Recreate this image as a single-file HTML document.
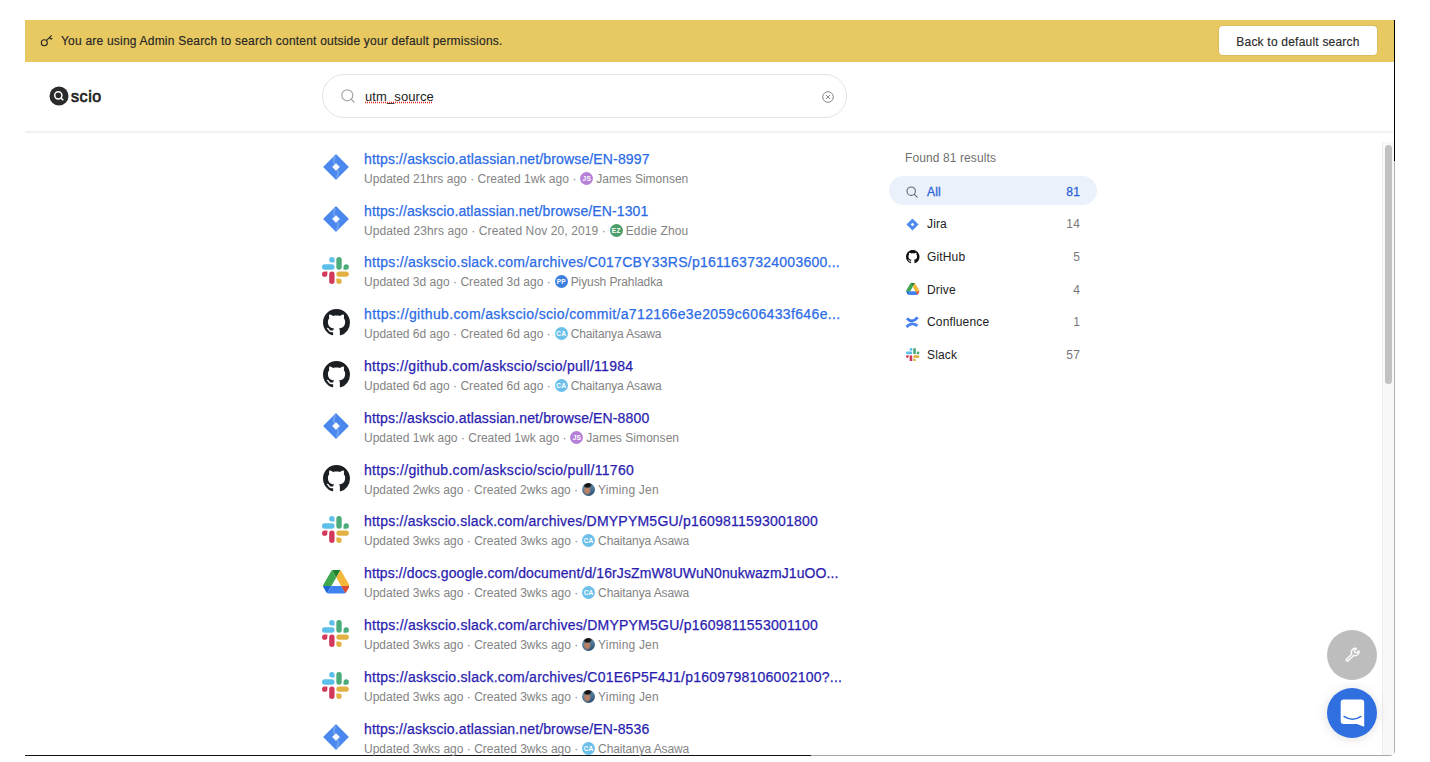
<!DOCTYPE html>
<html><head><meta charset="utf-8"><title>scio</title>
<style>
*{box-sizing:border-box;margin:0;padding:0}
html,body{width:1430px;height:762px;overflow:hidden;background:#fff;font-family:"Liberation Sans",sans-serif;color:#222}
#banner{position:absolute;left:25px;top:20px;width:1369px;height:42px;background:#e8c861}
#key{position:absolute;left:13px;top:13px}
#banner .msg{position:absolute;left:36px;top:13px;font-size:12px;line-height:16px;letter-spacing:.21px;color:#262626;white-space:nowrap}
#btn{position:absolute;left:1194px;top:6px;width:158px;height:29px;background:#fff;border-radius:4px;font-size:12px;letter-spacing:.21px;color:#2a2a2a;text-align:center;line-height:32px;box-shadow:0 0 0 1px rgba(60,70,90,.08)}
#rline{position:absolute;left:1394px;top:20px;width:1px;height:141px;background:#000}
#frame{position:absolute;left:25px;top:20px;width:1370px;height:736px;border-right:1px solid #b0b0b0;border-bottom:1px solid #a8a8a8;border-bottom-right-radius:5px}
#bline{position:absolute;left:25px;top:755px;width:786px;height:1px;background:#111}
#hdrline{position:absolute;left:25px;top:131px;width:1368px;height:2px;background:linear-gradient(#f5f5f5,#ededed)}
#logo{position:absolute;left:49px;top:86px}
#logotext{position:absolute;left:71px;top:87px;font-size:16px;line-height:20px;font-weight:normal;-webkit-text-stroke:.7px #222;color:#222;letter-spacing:.6px}
#search{position:absolute;left:322px;top:74px;width:525px;height:44px;border:1px solid #e3e3e3;border-radius:22px}
#search .q{position:absolute;left:42px;top:14px;font-size:13px;line-height:16px;letter-spacing:.1px;color:#222;text-decoration:underline dotted #e0281e;text-underline-offset:1px}
#search .si{position:absolute;left:18px;top:14px}
#search .ci{position:absolute;left:498.7px;top:15.5px}
#track{position:absolute;left:1382px;top:142px;width:12px;height:613px;background:#f8f8f8;border-left:1px solid #ededed}
#thumb{position:absolute;left:1385px;top:145px;width:7px;height:239px;background:#c1c1c1;border-radius:4px}
.fab{position:absolute;left:1327px;width:50px;height:50px;border-radius:50%}
#wrench{top:630px;background:#bdbdbd}
#chat{top:688px;background:#2f6fe0;box-shadow:0 1px 12px rgba(0,0,0,.13)}
.fab svg{position:absolute;left:0;top:0}
.row{position:absolute;left:322px;width:560px;height:52px}
.row .icw{position:absolute;left:0;top:3px;width:28px;height:28px}
.row .icw svg{position:absolute;left:0;top:0}
.row .t{position:absolute;left:42px;top:0;font-size:14px;line-height:16px;letter-spacing:.17px;white-space:nowrap;color:#2b6be6}
.row .t.v{color:#2a1db0}
.row .s{position:absolute;left:42px;top:20px;font-size:12px;line-height:16px;letter-spacing:.06px;white-space:nowrap;color:#7a7a7a}
.av{display:inline-block;width:13px;height:13px;border-radius:50%;vertical-align:2px;color:#fff;font-size:6.5px;font-weight:bold;letter-spacing:.2px;text-align:center;line-height:13px;margin-right:3px;margin-left:.5px}
.av.ph{color:transparent;background:radial-gradient(ellipse 38% 28% at 42% 14%,#141414 55%,rgba(20,20,20,0) 100%),radial-gradient(ellipse 30% 36% at 40% 58%,#b98266 55%,rgba(185,130,102,0) 100%),linear-gradient(160deg,#8fb3c8 0%,#4d7696 50%,#23476a 100%)}
#side{position:absolute;left:889px;top:0;width:208px;height:400px}
#found{position:absolute;left:16px;top:150.5px;font-size:12px;line-height:14px;letter-spacing:.1px;color:#707070;white-space:nowrap}
.cat{position:absolute;left:0;width:208px;height:29px;font-size:12px;color:#222}
.cat.sel{background:#eaf1fb;border-radius:15px;color:#2b64d8}
.cat .ci{position:absolute;left:17px;top:8px;width:13px;height:13px}
.cat .ci svg{position:absolute;left:0;top:0}
.cat .cn{position:absolute;left:38px;top:8px;line-height:14px;letter-spacing:.15px}
.cat .cc{position:absolute;right:17.4px;top:8px;line-height:14px;color:#777;letter-spacing:.15px}
.cat.sel .cc{color:#2b64d8}
.r-jira .icw{top:2.3px}
.r-github .icw{left:1px;top:3px}
.r-drive .icw{top:5px;left:.5px}
.row .t{-webkit-text-stroke:.25px currentColor}
.cat.sel .cn,.cat.sel .cc{-webkit-text-stroke:.3px currentColor}
.ci-conf svg{left:-1px!important;top:0!important}
.ci-search svg{top:2px!important}
.ci-jira svg{top:.5px!important}
.cat .cc{right:17px}
.row .s{color:#838383}
#banner .msg,#btn{-webkit-text-stroke:.15px currentColor}
.cat.sel .cn,.cat.sel .cc{top:9px}

</style></head><body>
<div id="banner"><svg id="key" width="16" height="14" viewBox="0 0 16 14"><circle cx="6.3" cy="9.7" r="3" fill="none" stroke="#262626" stroke-width="1.1"/><path d="M8.4 7.6 L13.6 2.4 M11.5 4.5 L13.2 6.2 L14.3 5.1" stroke="#262626" stroke-width="1.1" fill="none" stroke-linejoin="round"/></svg><span class="msg">You are using Admin Search to search content outside your default permissions.</span><div id="btn">Back to default search</div></div>
<div id="frame"></div><div id="rline"></div><div id="bline"></div>
<div id="hdrline"></div>
<svg id="logo" width="20" height="20" viewBox="0 0 20 20"><circle cx="10" cy="10" r="9.5" fill="#2b2b2b"/><circle cx="9.3" cy="9.3" r="3.6" fill="none" stroke="#fff" stroke-width="1.5"/><path d="M11.9 11.9 L14.3 14.3" stroke="#fff" stroke-width="1.5"/></svg>
<div id="logotext">scio</div>
<div id="search"><svg class="si" width="16" height="16" viewBox="0 0 16 16"><circle cx="6.3" cy="6.3" r="5.5" fill="none" stroke="#a3a3a3" stroke-width="1.2"/><path d="M10.2 10.2 L13 13" stroke="#a3a3a3" stroke-width="1.2" stroke-linecap="round"/></svg><span class="q">utm_source</span><svg class="ci" width="12" height="12" viewBox="0 0 12 12"><circle cx="6" cy="6" r="5.3" fill="none" stroke="#8a8a8a" stroke-width="1"/><path d="M4 4 L8 8 M8 4 L4 8" stroke="#8a8a8a" stroke-width="1"/></svg></div>
<div id="track"></div><div id="thumb"></div>
<div class="fab" id="wrench"><svg width="50" height="50" viewBox="0 0 50 50"><g transform="translate(19.4 30.5) scale(.78) translate(-18.3 -35.2)"><path d="M18.5 33.5 L25.2 26.8 C24.2 24.5 24.8 22 26.6 20.6 C28 19.5 29.8 19.2 31.3 19.7 L28.6 22.4 L29.2 24.8 L31.6 25.4 L34.3 22.7 C34.8 24.3 34.4 26.1 33.2 27.4 C31.8 28.9 29.6 29.5 27.5 28.7 L20.6 35.6 C20 36.2 19.1 36.2 18.5 35.6 C17.9 35 17.9 34.1 18.5 33.5 Z" fill="none" stroke="#fff" stroke-width="1.7" stroke-linejoin="round"/></g></svg></div>
<div class="fab" id="chat"><svg width="50" height="50" viewBox="0 0 50 50"><path d="M13.7 14.6 C13.7 12.8 14.8 11.6 16.6 11.6 L34.3 11.6 C36.1 11.6 37.2 12.8 37.2 14.6 L37.2 38.7 L30 35.9 L16.6 35.9 C14.8 35.9 13.7 34.7 13.7 32.9 Z" fill="#fff"/><path d="M17 28.4 Q25.5 34.2 34 28.4" stroke="#2f6fe0" stroke-width="1.4" fill="none" stroke-linecap="round"/></svg></div>

<div id="results">
<div class="row r-jira" style="top:150.70px"><div class="icw"><svg viewBox="0 0 28 28" width="28" height="28"><path d="M14 2 L26 14 L14 26 L2 14 Z" fill="#4a88ee" stroke="#4a88ee" stroke-width="1.3" stroke-linejoin="round"/><path d="M13.6 3 Q10.6 7.2 12.6 11.4" stroke="#8db3f5" stroke-width="2.2" fill="none" opacity=".5"/><path d="M15.4 16.6 Q17.4 20.8 14.4 25" stroke="#8db3f5" stroke-width="2.2" fill="none" opacity=".5"/><path d="M14 10.4 L17.6 14 L14 17.6 L10.4 14 Z" fill="#fff" stroke="#fff" stroke-width=".4" stroke-linejoin="round"/></svg></div><div class="t" style="letter-spacing:0.142px">https://askscio.atlassian.net/browse/EN-8997</div><div class="s"><span style="letter-spacing:0.044px">Updated 21hrs ago · Created 1wk ago · </span><span class="av" style="background:#b780d8">JS</span><span style="letter-spacing:-0.005px">James Simonsen</span></div></div>
<div class="row r-jira" style="top:202.50px"><div class="icw"><svg viewBox="0 0 28 28" width="28" height="28"><path d="M14 2 L26 14 L14 26 L2 14 Z" fill="#4a88ee" stroke="#4a88ee" stroke-width="1.3" stroke-linejoin="round"/><path d="M13.6 3 Q10.6 7.2 12.6 11.4" stroke="#8db3f5" stroke-width="2.2" fill="none" opacity=".5"/><path d="M15.4 16.6 Q17.4 20.8 14.4 25" stroke="#8db3f5" stroke-width="2.2" fill="none" opacity=".5"/><path d="M14 10.4 L17.6 14 L14 17.6 L10.4 14 Z" fill="#fff" stroke="#fff" stroke-width=".4" stroke-linejoin="round"/></svg></div><div class="t" style="letter-spacing:0.114px">https://askscio.atlassian.net/browse/EN-1301</div><div class="s"><span style="letter-spacing:0.102px">Updated 23hrs ago · Created Nov 20, 2019 · </span><span class="av" style="background:#4c9e68">EZ</span><span style="letter-spacing:0.127px">Eddie Zhou</span></div></div>
<div class="row r-slack" style="top:254.30px"><div class="icw"><svg class="ic" viewBox="0 0 54 54" width="27" height="27"><path d="M19.712.133a5.381 5.381 0 0 0-5.376 5.387 5.381 5.381 0 0 0 5.376 5.386h5.376V5.52A5.381 5.381 0 0 0 19.712.133m0 14.365H5.376A5.381 5.381 0 0 0 0 19.884a5.381 5.381 0 0 0 5.376 5.387h14.336a5.381 5.381 0 0 0 5.376-5.387 5.381 5.381 0 0 0-5.376-5.386" fill="#5bbfe9"/><path d="M53.76 19.884a5.381 5.381 0 0 0-5.376-5.386 5.381 5.381 0 0 0-5.376 5.386v5.387h5.376a5.381 5.381 0 0 0 5.376-5.387m-14.336 0V5.52A5.381 5.381 0 0 0 34.048.133a5.381 5.381 0 0 0-5.376 5.387v14.364a5.381 5.381 0 0 0 5.376 5.387 5.381 5.381 0 0 0 5.376-5.387" fill="#4bab79"/><path d="M34.048 54a5.381 5.381 0 0 0 5.376-5.387 5.381 5.381 0 0 0-5.376-5.386h-5.376v5.386A5.381 5.381 0 0 0 34.048 54m0-14.365h14.336a5.381 5.381 0 0 0 5.376-5.386 5.381 5.381 0 0 0-5.376-5.387H34.048a5.381 5.381 0 0 0-5.376 5.387 5.381 5.381 0 0 0 5.376 5.386" fill="#e1b142"/><path d="M0 34.249a5.381 5.381 0 0 0 5.376 5.386 5.381 5.381 0 0 0 5.376-5.386v-5.387H5.376A5.381 5.381 0 0 0 0 34.25m14.336-.001v14.364A5.381 5.381 0 0 0 19.712 54a5.381 5.381 0 0 0 5.376-5.387V34.25a5.381 5.381 0 0 0-5.376-5.387 5.381 5.381 0 0 0-5.376 5.387" fill="#d23a5d"/></svg></div><div class="t" style="letter-spacing:0.255px">https://askscio.slack.com/archives/C017CBY33RS/p1611637324003600...</div><div class="s"><span style="letter-spacing:0.021px">Updated 3d ago · Created 3d ago · </span><span class="av" style="background:#3d7fdd">PP</span><span style="letter-spacing:-0.089px">Piyush Prahladka</span></div></div>
<div class="row r-github" style="top:306.10px"><div class="icw"><svg class="ic" viewBox="0 0 16 16" width="27" height="27"><path fill="#1b1f23" d="M8 0C3.58 0 0 3.58 0 8c0 3.54 2.29 6.53 5.47 7.59.4.07.55-.17.55-.38 0-.19-.01-.82-.01-1.49-2.01.37-2.53-.49-2.69-.94-.09-.23-.48-.94-.82-1.13-.28-.15-.68-.52-.01-.53.63-.01 1.08.58 1.23.82.72 1.21 1.87.87 2.33.66.07-.52.28-.87.51-1.06-1.78-.2-3.64-.89-3.64-3.95 0-.87.31-1.59.82-2.15-.08-.2-.36-1.02.08-2.12 0 0 .67-.21 2.2.82.64-.18 1.32-.27 2-.27.68 0 1.36.09 2 .27 1.53-1.04 2.2-.82 2.2-.82.44 1.1.16 1.92.08 2.12.51.56.82 1.27.82 2.15 0 3.07-1.87 3.75-3.65 3.95.29.25.54.73.54 1.48 0 1.07-.01 1.93-.01 2.2 0 .21.15.46.55.38A8.013 8.013 0 0016 8c0-4.42-3.58-8-8-8z"/></svg></div><div class="t" style="letter-spacing:0.358px">https://github.com/askscio/scio/commit/a712166e3e2059c606433f646e...</div><div class="s"><span style="letter-spacing:0.021px">Updated 6d ago · Created 6d ago · </span><span class="av" style="background:#6cc0ea">CA</span><span style="letter-spacing:-0.138px">Chaitanya Asawa</span></div></div>
<div class="row r-github" style="top:357.90px"><div class="icw"><svg class="ic" viewBox="0 0 16 16" width="27" height="27"><path fill="#1b1f23" d="M8 0C3.58 0 0 3.58 0 8c0 3.54 2.29 6.53 5.47 7.59.4.07.55-.17.55-.38 0-.19-.01-.82-.01-1.49-2.01.37-2.53-.49-2.69-.94-.09-.23-.48-.94-.82-1.13-.28-.15-.68-.52-.01-.53.63-.01 1.08.58 1.23.82.72 1.21 1.87.87 2.33.66.07-.52.28-.87.51-1.06-1.78-.2-3.64-.89-3.64-3.95 0-.87.31-1.59.82-2.15-.08-.2-.36-1.02.08-2.12 0 0 .67-.21 2.2.82.64-.18 1.32-.27 2-.27.68 0 1.36.09 2 .27 1.53-1.04 2.2-.82 2.2-.82.44 1.1.16 1.92.08 2.12.51.56.82 1.27.82 2.15 0 3.07-1.87 3.75-3.65 3.95.29.25.54.73.54 1.48 0 1.07-.01 1.93-.01 2.2 0 .21.15.46.55.38A8.013 8.013 0 0016 8c0-4.42-3.58-8-8-8z"/></svg></div><div class="t v" style="letter-spacing:0.287px">https://github.com/askscio/scio/pull/11984</div><div class="s"><span style="letter-spacing:0.021px">Updated 6d ago · Created 6d ago · </span><span class="av" style="background:#6cc0ea">CA</span><span style="letter-spacing:-0.125px">Chaitanya Asawa</span></div></div>
<div class="row r-jira" style="top:409.70px"><div class="icw"><svg viewBox="0 0 28 28" width="28" height="28"><path d="M14 2 L26 14 L14 26 L2 14 Z" fill="#4a88ee" stroke="#4a88ee" stroke-width="1.3" stroke-linejoin="round"/><path d="M13.6 3 Q10.6 7.2 12.6 11.4" stroke="#8db3f5" stroke-width="2.2" fill="none" opacity=".5"/><path d="M15.4 16.6 Q17.4 20.8 14.4 25" stroke="#8db3f5" stroke-width="2.2" fill="none" opacity=".5"/><path d="M14 10.4 L17.6 14 L14 17.6 L10.4 14 Z" fill="#fff" stroke="#fff" stroke-width=".4" stroke-linejoin="round"/></svg></div><div class="t v" style="letter-spacing:0.135px">https://askscio.atlassian.net/browse/EN-8800</div><div class="s"><span style="letter-spacing:0.010px">Updated 1wk ago · Created 1wk ago · </span><span class="av" style="background:#b780d8">JS</span><span style="letter-spacing:0.053px">James Simonsen</span></div></div>
<div class="row r-github" style="top:461.50px"><div class="icw"><svg class="ic" viewBox="0 0 16 16" width="27" height="27"><path fill="#1b1f23" d="M8 0C3.58 0 0 3.58 0 8c0 3.54 2.29 6.53 5.47 7.59.4.07.55-.17.55-.38 0-.19-.01-.82-.01-1.49-2.01.37-2.53-.49-2.69-.94-.09-.23-.48-.94-.82-1.13-.28-.15-.68-.52-.01-.53.63-.01 1.08.58 1.23.82.72 1.21 1.87.87 2.33.66.07-.52.28-.87.51-1.06-1.78-.2-3.64-.89-3.64-3.95 0-.87.31-1.59.82-2.15-.08-.2-.36-1.02.08-2.12 0 0 .67-.21 2.2.82.64-.18 1.32-.27 2-.27.68 0 1.36.09 2 .27 1.53-1.04 2.2-.82 2.2-.82.44 1.1.16 1.92.08 2.12.51.56.82 1.27.82 2.15 0 3.07-1.87 3.75-3.65 3.95.29.25.54.73.54 1.48 0 1.07-.01 1.93-.01 2.2 0 .21.15.46.55.38A8.013 8.013 0 0016 8c0-4.42-3.58-8-8-8z"/></svg></div><div class="t v" style="letter-spacing:0.304px">https://github.com/askscio/scio/pull/11760</div><div class="s"><span style="letter-spacing:-0.001px">Updated 2wks ago · Created 2wks ago · </span><span class="av ph">YJ</span><span style="letter-spacing:0.196px">Yiming Jen</span></div></div>
<div class="row r-slack" style="top:513.30px"><div class="icw"><svg class="ic" viewBox="0 0 54 54" width="27" height="27"><path d="M19.712.133a5.381 5.381 0 0 0-5.376 5.387 5.381 5.381 0 0 0 5.376 5.386h5.376V5.52A5.381 5.381 0 0 0 19.712.133m0 14.365H5.376A5.381 5.381 0 0 0 0 19.884a5.381 5.381 0 0 0 5.376 5.387h14.336a5.381 5.381 0 0 0 5.376-5.387 5.381 5.381 0 0 0-5.376-5.386" fill="#5bbfe9"/><path d="M53.76 19.884a5.381 5.381 0 0 0-5.376-5.386 5.381 5.381 0 0 0-5.376 5.386v5.387h5.376a5.381 5.381 0 0 0 5.376-5.387m-14.336 0V5.52A5.381 5.381 0 0 0 34.048.133a5.381 5.381 0 0 0-5.376 5.387v14.364a5.381 5.381 0 0 0 5.376 5.387 5.381 5.381 0 0 0 5.376-5.387" fill="#4bab79"/><path d="M34.048 54a5.381 5.381 0 0 0 5.376-5.387 5.381 5.381 0 0 0-5.376-5.386h-5.376v5.386A5.381 5.381 0 0 0 34.048 54m0-14.365h14.336a5.381 5.381 0 0 0 5.376-5.386 5.381 5.381 0 0 0-5.376-5.387H34.048a5.381 5.381 0 0 0-5.376 5.387 5.381 5.381 0 0 0 5.376 5.386" fill="#e1b142"/><path d="M0 34.249a5.381 5.381 0 0 0 5.376 5.386 5.381 5.381 0 0 0 5.376-5.386v-5.387H5.376A5.381 5.381 0 0 0 0 34.25m14.336-.001v14.364A5.381 5.381 0 0 0 19.712 54a5.381 5.381 0 0 0 5.376-5.387V34.25a5.381 5.381 0 0 0-5.376-5.387 5.381 5.381 0 0 0-5.376 5.387" fill="#d23a5d"/></svg></div><div class="t v" style="letter-spacing:0.224px">https://askscio.slack.com/archives/DMYPYM5GU/p1609811593001800</div><div class="s"><span style="letter-spacing:0.004px">Updated 3wks ago · Created 3wks ago · </span><span class="av" style="background:#6cc0ea">CA</span><span style="letter-spacing:-0.115px">Chaitanya Asawa</span></div></div>
<div class="row r-drive" style="top:565.10px"><div class="icw"><svg class="ic" viewBox="0 0 87.3 78" width="26.5" height="23.5"><path d="m6.6 66.85 3.85 6.65c.8 1.4 1.95 2.5 3.3 3.3l13.75-23.8h-27.5c0 1.55.4 3.1 1.2 4.5z" fill="#1f67d6"/><path d="m43.65 25-13.75-23.8c-1.35.8-2.5 1.9-3.3 3.3l-25.4 44a9.06 9.06 0 0 0 -1.2 4.5h27.5z" fill="#3fa84f"/><path d="m73.55 76.8c1.35-.8 2.5-1.9 3.3-3.3l1.6-2.75 7.65-13.25c.8-1.4 1.2-2.95 1.2-4.5h-27.502l5.852 11.5z" fill="#dd4c34"/><path d="m43.65 25 13.75-23.8c-1.35-.8-2.9-1.2-4.5-1.2h-18.5c-1.6 0-3.15.45-4.5 1.2z" fill="#23802f"/><path d="m59.8 53h-32.3l-13.75 23.8c1.35.8 2.9 1.2 4.5 1.2h50.8c1.6 0 3.15-.45 4.5-1.2z" fill="#3d82ee"/><path d="m73.4 26.5-12.7-22c-.8-1.4-1.95-2.5-3.3-3.3l-13.75 23.8 16.15 28h27.45c0-1.55-.4-3.1-1.2-4.5z" fill="#f3b83a"/></svg></div><div class="t v" style="letter-spacing:0.100px">https://docs.google.com/document/d/16rJsZmW8UWuN0nukwazmJ1uOO...</div><div class="s"><span style="letter-spacing:0.004px">Updated 3wks ago · Created 3wks ago · </span><span class="av" style="background:#6cc0ea">CA</span><span style="letter-spacing:-0.115px">Chaitanya Asawa</span></div></div>
<div class="row r-slack" style="top:616.90px"><div class="icw"><svg class="ic" viewBox="0 0 54 54" width="27" height="27"><path d="M19.712.133a5.381 5.381 0 0 0-5.376 5.387 5.381 5.381 0 0 0 5.376 5.386h5.376V5.52A5.381 5.381 0 0 0 19.712.133m0 14.365H5.376A5.381 5.381 0 0 0 0 19.884a5.381 5.381 0 0 0 5.376 5.387h14.336a5.381 5.381 0 0 0 5.376-5.387 5.381 5.381 0 0 0-5.376-5.386" fill="#5bbfe9"/><path d="M53.76 19.884a5.381 5.381 0 0 0-5.376-5.386 5.381 5.381 0 0 0-5.376 5.386v5.387h5.376a5.381 5.381 0 0 0 5.376-5.387m-14.336 0V5.52A5.381 5.381 0 0 0 34.048.133a5.381 5.381 0 0 0-5.376 5.387v14.364a5.381 5.381 0 0 0 5.376 5.387 5.381 5.381 0 0 0 5.376-5.387" fill="#4bab79"/><path d="M34.048 54a5.381 5.381 0 0 0 5.376-5.387 5.381 5.381 0 0 0-5.376-5.386h-5.376v5.386A5.381 5.381 0 0 0 34.048 54m0-14.365h14.336a5.381 5.381 0 0 0 5.376-5.386 5.381 5.381 0 0 0-5.376-5.387H34.048a5.381 5.381 0 0 0-5.376 5.387 5.381 5.381 0 0 0 5.376 5.386" fill="#e1b142"/><path d="M0 34.249a5.381 5.381 0 0 0 5.376 5.386 5.381 5.381 0 0 0 5.376-5.386v-5.387H5.376A5.381 5.381 0 0 0 0 34.25m14.336-.001v14.364A5.381 5.381 0 0 0 19.712 54a5.381 5.381 0 0 0 5.376-5.387V34.25a5.381 5.381 0 0 0-5.376-5.387 5.381 5.381 0 0 0-5.376 5.387" fill="#d23a5d"/></svg></div><div class="t v" style="letter-spacing:0.240px">https://askscio.slack.com/archives/DMYPYM5GU/p1609811553001100</div><div class="s"><span style="letter-spacing:0.004px">Updated 3wks ago · Created 3wks ago · </span><span class="av ph">YJ</span><span style="letter-spacing:0.173px">Yiming Jen</span></div></div>
<div class="row r-slack" style="top:668.70px"><div class="icw"><svg class="ic" viewBox="0 0 54 54" width="27" height="27"><path d="M19.712.133a5.381 5.381 0 0 0-5.376 5.387 5.381 5.381 0 0 0 5.376 5.386h5.376V5.52A5.381 5.381 0 0 0 19.712.133m0 14.365H5.376A5.381 5.381 0 0 0 0 19.884a5.381 5.381 0 0 0 5.376 5.387h14.336a5.381 5.381 0 0 0 5.376-5.387 5.381 5.381 0 0 0-5.376-5.386" fill="#5bbfe9"/><path d="M53.76 19.884a5.381 5.381 0 0 0-5.376-5.386 5.381 5.381 0 0 0-5.376 5.386v5.387h5.376a5.381 5.381 0 0 0 5.376-5.387m-14.336 0V5.52A5.381 5.381 0 0 0 34.048.133a5.381 5.381 0 0 0-5.376 5.387v14.364a5.381 5.381 0 0 0 5.376 5.387 5.381 5.381 0 0 0 5.376-5.387" fill="#4bab79"/><path d="M34.048 54a5.381 5.381 0 0 0 5.376-5.387 5.381 5.381 0 0 0-5.376-5.386h-5.376v5.386A5.381 5.381 0 0 0 34.048 54m0-14.365h14.336a5.381 5.381 0 0 0 5.376-5.386 5.381 5.381 0 0 0-5.376-5.387H34.048a5.381 5.381 0 0 0-5.376 5.387 5.381 5.381 0 0 0 5.376 5.386" fill="#e1b142"/><path d="M0 34.249a5.381 5.381 0 0 0 5.376 5.386 5.381 5.381 0 0 0 5.376-5.386v-5.387H5.376A5.381 5.381 0 0 0 0 34.25m14.336-.001v14.364A5.381 5.381 0 0 0 19.712 54a5.381 5.381 0 0 0 5.376-5.387V34.25a5.381 5.381 0 0 0-5.376-5.387 5.381 5.381 0 0 0-5.376 5.387" fill="#d23a5d"/></svg></div><div class="t v" style="letter-spacing:0.246px">https://askscio.slack.com/archives/C01E6P5F4J1/p1609798106002100?...</div><div class="s"><span style="letter-spacing:0.004px">Updated 3wks ago · Created 3wks ago · </span><span class="av ph">YJ</span><span style="letter-spacing:0.173px">Yiming Jen</span></div></div>
<div class="row r-jira" style="top:720.50px"><div class="icw"><svg viewBox="0 0 28 28" width="28" height="28"><path d="M14 2 L26 14 L14 26 L2 14 Z" fill="#4a88ee" stroke="#4a88ee" stroke-width="1.3" stroke-linejoin="round"/><path d="M13.6 3 Q10.6 7.2 12.6 11.4" stroke="#8db3f5" stroke-width="2.2" fill="none" opacity=".5"/><path d="M15.4 16.6 Q17.4 20.8 14.4 25" stroke="#8db3f5" stroke-width="2.2" fill="none" opacity=".5"/><path d="M14 10.4 L17.6 14 L14 17.6 L10.4 14 Z" fill="#fff" stroke="#fff" stroke-width=".4" stroke-linejoin="round"/></svg></div><div class="t v" style="letter-spacing:0.137px">https://askscio.atlassian.net/browse/EN-8536</div><div class="s"><span style="letter-spacing:0.004px">Updated 3wks ago · Created 3wks ago · </span><span class="av" style="background:#6cc0ea">CA</span><span style="letter-spacing:-0.115px">Chaitanya Asawa</span></div></div>
</div>
<div id="side"><div id="found">Found 81 results</div>
<div class="cat sel" style="top:176.00px"><span class="ci ci-search"><svg viewBox="0 0 12 12" width="12" height="12"><circle cx="5.2" cy="5.2" r="4.2" fill="none" stroke="#666" stroke-width="1.1"/><path d="M8.3 8.3 L11.2 11.2" stroke="#666" stroke-width="1.1" stroke-linecap="round"/></svg></span><span class="cn">All</span><span class="cc">81</span></div>
<div class="cat" style="top:209.40px"><span class="ci ci-jira"><svg viewBox="0 0 13 13" width="13" height="13"><path d="M6.5 .9 L12.1 6.5 L6.5 12.1 L.9 6.5 Z" fill="#4a88ee" stroke="#4a88ee" stroke-width=".8" stroke-linejoin="round"/><path d="M6.5 4.7 L8.3 6.5 L6.5 8.3 L4.7 6.5 Z" fill="#fff"/></svg></span><span class="cn">Jira</span><span class="cc">14</span></div>
<div class="cat" style="top:242.00px"><span class="ci ci-github"><svg class="ic" viewBox="0 0 16 16" width="13.5" height="13.5"><path fill="#111" d="M8 0C3.58 0 0 3.58 0 8c0 3.54 2.29 6.53 5.47 7.59.4.07.55-.17.55-.38 0-.19-.01-.82-.01-1.49-2.01.37-2.53-.49-2.69-.94-.09-.23-.48-.94-.82-1.13-.28-.15-.68-.52-.01-.53.63-.01 1.08.58 1.23.82.72 1.21 1.87.87 2.33.66.07-.52.28-.87.51-1.06-1.78-.2-3.64-.89-3.64-3.95 0-.87.31-1.59.82-2.15-.08-.2-.36-1.02.08-2.12 0 0 .67-.21 2.2.82.64-.18 1.32-.27 2-.27.68 0 1.36.09 2 .27 1.53-1.04 2.2-.82 2.2-.82.44 1.1.16 1.92.08 2.12.51.56.82 1.27.82 2.15 0 3.07-1.87 3.75-3.65 3.95.29.25.54.73.54 1.48 0 1.07-.01 1.93-.01 2.2 0 .21.15.46.55.38A8.013 8.013 0 0016 8c0-4.42-3.58-8-8-8z"/></svg></span><span class="cn">GitHub</span><span class="cc">5</span></div>
<div class="cat" style="top:274.60px"><span class="ci ci-drive"><svg class="ic" viewBox="0 0 87.3 78" width="13.5" height="12"><path d="m6.6 66.85 3.85 6.65c.8 1.4 1.95 2.5 3.3 3.3l13.75-23.8h-27.5c0 1.55.4 3.1 1.2 4.5z" fill="#1f67d6"/><path d="m43.65 25-13.75-23.8c-1.35.8-2.5 1.9-3.3 3.3l-25.4 44a9.06 9.06 0 0 0 -1.2 4.5h27.5z" fill="#3fa84f"/><path d="m73.55 76.8c1.35-.8 2.5-1.9 3.3-3.3l1.6-2.75 7.65-13.25c.8-1.4 1.2-2.95 1.2-4.5h-27.502l5.852 11.5z" fill="#dd4c34"/><path d="m43.65 25 13.75-23.8c-1.35-.8-2.9-1.2-4.5-1.2h-18.5c-1.6 0-3.15.45-4.5 1.2z" fill="#23802f"/><path d="m59.8 53h-32.3l-13.75 23.8c1.35.8 2.9 1.2 4.5 1.2h50.8c1.6 0 3.15-.45 4.5-1.2z" fill="#3d82ee"/><path d="m73.4 26.5-12.7-22c-.8-1.4-1.95-2.5-3.3-3.3l-13.75 23.8 16.15 28h27.45c0-1.55-.4-3.1-1.2-4.5z" fill="#f3b83a"/></svg></span><span class="cn">Drive</span><span class="cc">4</span></div>
<div class="cat" style="top:307.20px"><span class="ci ci-conf"><svg viewBox="0 0 14 14" width="14" height="14"><path d="M2 3.3 Q7 9 12.6 2.3" stroke="#3f7bef" stroke-width="2.8" fill="none"/><path d="M1.5 12 Q6.5 6.5 12.4 10.8" stroke="#4a83f0" stroke-width="2.8" fill="none"/></svg></span><span class="cn">Confluence</span><span class="cc">1</span></div>
<div class="cat" style="top:339.80px"><span class="ci ci-slack"><svg class="ic" viewBox="0 0 54 54" width="13.5" height="13.5"><path d="M19.712.133a5.381 5.381 0 0 0-5.376 5.387 5.381 5.381 0 0 0 5.376 5.386h5.376V5.52A5.381 5.381 0 0 0 19.712.133m0 14.365H5.376A5.381 5.381 0 0 0 0 19.884a5.381 5.381 0 0 0 5.376 5.387h14.336a5.381 5.381 0 0 0 5.376-5.387 5.381 5.381 0 0 0-5.376-5.386" fill="#5bbfe9"/><path d="M53.76 19.884a5.381 5.381 0 0 0-5.376-5.386 5.381 5.381 0 0 0-5.376 5.386v5.387h5.376a5.381 5.381 0 0 0 5.376-5.387m-14.336 0V5.52A5.381 5.381 0 0 0 34.048.133a5.381 5.381 0 0 0-5.376 5.387v14.364a5.381 5.381 0 0 0 5.376 5.387 5.381 5.381 0 0 0 5.376-5.387" fill="#4bab79"/><path d="M34.048 54a5.381 5.381 0 0 0 5.376-5.387 5.381 5.381 0 0 0-5.376-5.386h-5.376v5.386A5.381 5.381 0 0 0 34.048 54m0-14.365h14.336a5.381 5.381 0 0 0 5.376-5.386 5.381 5.381 0 0 0-5.376-5.387H34.048a5.381 5.381 0 0 0-5.376 5.387 5.381 5.381 0 0 0 5.376 5.386" fill="#e1b142"/><path d="M0 34.249a5.381 5.381 0 0 0 5.376 5.386 5.381 5.381 0 0 0 5.376-5.386v-5.387H5.376A5.381 5.381 0 0 0 0 34.25m14.336-.001v14.364A5.381 5.381 0 0 0 19.712 54a5.381 5.381 0 0 0 5.376-5.387V34.25a5.381 5.381 0 0 0-5.376-5.387 5.381 5.381 0 0 0-5.376 5.387" fill="#d23a5d"/></svg></span><span class="cn">Slack</span><span class="cc">57</span></div>
</div>
</body></html>
